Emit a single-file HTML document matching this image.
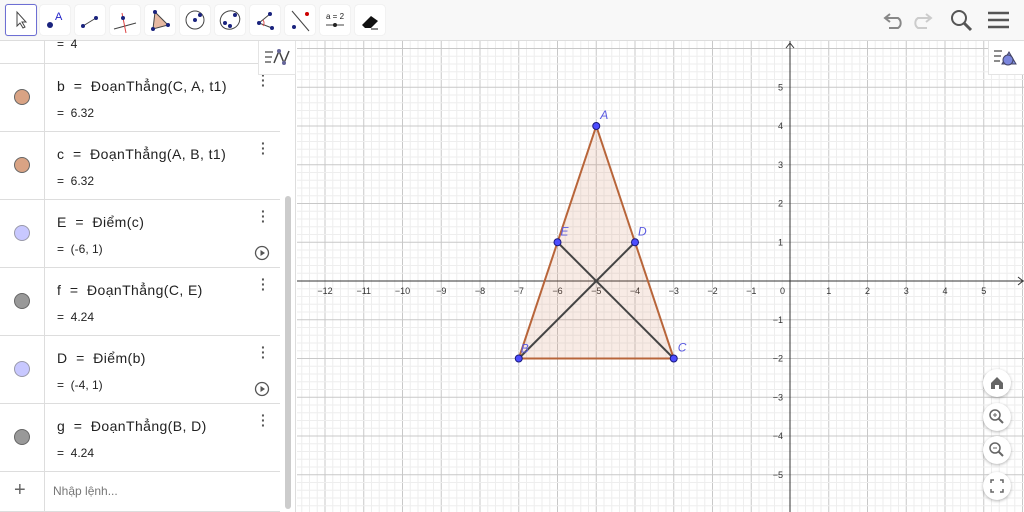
<!DOCTYPE html>
<html><head><meta charset="utf-8"><style>
body{margin:0;width:1024px;height:512px;overflow:hidden;background:#fff;font-family:"Liberation Sans",sans-serif;position:relative}
#tb{position:absolute;left:0;top:0;width:1024px;height:40px;background:#f8f8f8;border-bottom:1px solid #ddd}
.tool{position:absolute;top:5px;width:30px;height:30px;background:#fff;border-radius:3px;box-shadow:0 0 1px #ccc}
#ap{position:absolute;left:0;top:41px;width:295px;height:471px;background:#fff;border-right:1px solid #ddd}
.row{position:absolute;left:0;width:280px;height:68px;border-bottom:1px solid #ddd}
.row .c{position:absolute;left:14px;top:26px;width:14px;height:14px;border-radius:50%;border:1px solid #666}
.row .n{position:absolute;left:57px;top:15px;font-size:14px;letter-spacing:0.4px;color:#222}
.row .v{position:absolute;left:57px;top:43px;font-size:12px;color:#222}
.row .dots{position:absolute;left:261px;top:10px;font-size:14px;color:#555;line-height:5px;font-weight:bold}
.rb{position:absolute;left:983px;width:28px;height:28px;border-radius:50%;background:#fff;box-shadow:0 1px 3px rgba(0,0,0,.3)}
</style></head><body>
<svg id="g" width="1024" height="512" style="position:absolute;left:0;top:0"></svg>
<div id="tb">
<div class="tool" style="left:5px;border:1.5px solid #6d6fd4;top:4px"><svg width="30" height="30"><path d="M11 7 L11 21 L14 18 L17 23 L19 22 L16 17 L20 17 Z" fill="#fff" stroke="#444"/></svg></div>
<div class="tool" style="left:40px"><svg width="30" height="30"><circle cx="10" cy="20" r="3" fill="#1a237e"/><text x="15" y="15" font-size="11" fill="#2323c8">A</text></svg></div>
<div class="tool" style="left:75px"><svg width="30" height="30"><line x1="8" y1="21" x2="21" y2="13" stroke="#444"/><circle cx="8" cy="21" r="2" fill="#1a237e"/><circle cx="21" cy="13" r="2" fill="#1a237e"/></svg></div>
<div class="tool" style="left:110px"><svg width="30" height="30"><line x1="4" y1="24" x2="26" y2="18" stroke="#444"/><line x1="12" y1="8" x2="16" y2="28" stroke="#d44"/><circle cx="13" cy="13" r="2" fill="#1a237e"/></svg></div>
<div class="tool" style="left:145px"><svg width="30" height="30"><path d="M10 7 L23 20 L8 24Z" fill="#e7b9a2" stroke="#444"/><circle cx="10" cy="7" r="2" fill="#1a237e"/><circle cx="23" cy="20" r="2" fill="#1a237e"/><circle cx="8" cy="24" r="2" fill="#1a237e"/></svg></div>
<div class="tool" style="left:180px"><svg width="30" height="30"><circle cx="15" cy="15" r="9" fill="none" stroke="#444"/><circle cx="15" cy="15" r="2" fill="#1a237e"/><circle cx="20" cy="10" r="2" fill="#1a237e"/></svg></div>
<div class="tool" style="left:215px"><svg width="30" height="30"><ellipse cx="15" cy="15" rx="10" ry="9" fill="none" stroke="#444" transform="rotate(-30 15 15)"/><circle cx="10" cy="18" r="2" fill="#1a237e"/><circle cx="15" cy="21" r="2" fill="#1a237e"/><circle cx="20" cy="10" r="2" fill="#1a237e"/></svg></div>
<div class="tool" style="left:250px"><svg width="30" height="30"><path d="M20 9 L9 18 L22 23" fill="none" stroke="#444"/><path d="M13 15 A5 5 0 0 1 13 21" fill="none" stroke="#d44"/><circle cx="20" cy="9" r="2" fill="#1a237e"/><circle cx="9" cy="18" r="2" fill="#1a237e"/><circle cx="22" cy="23" r="2" fill="#1a237e"/></svg></div>
<div class="tool" style="left:285px"><svg width="30" height="30"><line x1="7" y1="6" x2="24" y2="26" stroke="#444"/><circle cx="22" cy="9" r="2" fill="#c00"/><circle cx="9" cy="22" r="2" fill="#1a237e"/></svg></div>
<div class="tool" style="left:320px"><svg width="30" height="30"><text x="6" y="14" font-size="8" fill="#222">a = 2</text><line x1="6" y1="20" x2="24" y2="20" stroke="#444"/><circle cx="15" cy="20" r="2" fill="#222"/></svg></div>
<div class="tool" style="left:355px"><svg width="30" height="30"><path d="M7 20 L16 11 L23 16 L16 23 L10 23 Z" fill="#111"/><line x1="16" y1="24" x2="23" y2="24" stroke="#111"/></svg></div>
<svg style="position:absolute;left:880px;top:6px" width="140" height="28">
<path d="M10 8 L5 12 L10 16 M5 12 H18 A6 6 0 0 1 18 22 H9" fill="none" stroke="#888" stroke-width="2"/>
<path d="M46 8 L51 12 L46 16 M51 12 H38 A6 6 0 0 0 38 22 H47" fill="none" stroke="#ccc" stroke-width="2"/>
<circle cx="79" cy="12" r="7" fill="none" stroke="#555" stroke-width="2"/><line x1="84" y1="17" x2="91" y2="24" stroke="#555" stroke-width="3"/>
<path d="M108 7 H129 M108 14 H129 M108 21 H129" stroke="#555" stroke-width="2.5"/>
</svg>
</div>
<div id="ap">
<div class="row" style="top:-46px"><div class="v" style="top:42px">=&nbsp; 4</div></div>
<div class="row" style="top:22px"><div class="c" style="background:#d9a384"></div><div class="n">b &nbsp;= &nbsp;ĐoạnThẳng(C, A, t1)</div><div class="v">=&nbsp; 6.32</div><div class="dots">·<br>·<br>·</div></div>
<div class="row" style="top:90px"><div class="c" style="background:#d9a384"></div><div class="n">c &nbsp;= &nbsp;ĐoạnThẳng(A, B, t1)</div><div class="v">=&nbsp; 6.32</div><div class="dots">·<br>·<br>·</div></div>
<div class="row" style="top:158px"><div class="c" style="background:#c8c8ff;border-color:#99a"></div><div class="n">E &nbsp;= &nbsp;Điểm(c)</div><div class="v">=&nbsp; (-6, 1)</div><div class="dots">·<br>·<br>·</div><svg style="position:absolute;left:254px;top:46px" width="16" height="16"><circle cx="8" cy="8" r="6.5" fill="none" stroke="#555" stroke-width="1.3"/><path d="M6.5 5 L11 8 L6.5 11Z" fill="#555"/></svg></div>
<div class="row" style="top:226px"><div class="c" style="background:#999"></div><div class="n">f &nbsp;= &nbsp;ĐoạnThẳng(C, E)</div><div class="v">=&nbsp; 4.24</div><div class="dots">·<br>·<br>·</div></div>
<div class="row" style="top:294px"><div class="c" style="background:#c8c8ff;border-color:#99a"></div><div class="n">D &nbsp;= &nbsp;Điểm(b)</div><div class="v">=&nbsp; (-4, 1)</div><div class="dots">·<br>·<br>·</div><svg style="position:absolute;left:254px;top:46px" width="16" height="16"><circle cx="8" cy="8" r="6.5" fill="none" stroke="#555" stroke-width="1.3"/><path d="M6.5 5 L11 8 L6.5 11Z" fill="#555"/></svg></div>
<div class="row" style="top:362px"><div class="c" style="background:#999"></div><div class="n">g &nbsp;= &nbsp;ĐoạnThẳng(B, D)</div><div class="v">=&nbsp; 4.24</div><div class="dots">·<br>·<br>·</div></div>
<div class="row" style="top:430px;height:40px"><div style="position:absolute;left:14px;top:8px;font-size:20px;color:#666">+</div><div style="position:absolute;left:53px;top:13px;font-size:12px;color:#777">Nhập lệnh...</div></div>
<div style="position:absolute;left:44px;top:0;width:1px;height:471px;background:#ddd"></div>
<div style="position:absolute;left:285px;top:155px;width:6px;height:313px;background:#ccc;border-radius:3px"></div>
<div style="position:absolute;left:258px;top:0;width:36px;height:33px;background:#fff;border:1px solid #e4e4e4;border-top:none"><svg width="36" height="33"><path d="M6 11 H14 M6 16 H13 M6 21 H12" stroke="#666" stroke-width="1.5"/><path d="M15 22 L20 10 L25 22 L30 10" fill="none" stroke="#444" stroke-width="1.5"/><circle cx="20" cy="10" r="2" fill="#669"/><circle cx="25" cy="22" r="2" fill="#669"/></svg></div>
</div>
<div style="position:absolute;left:988px;top:41px;width:36px;height:33px;background:#fff;border-left:1px solid #e4e4e4;border-bottom:1px solid #e4e4e4"><svg width="36" height="33"><path d="M5 10 H13 M5 15 H12 M5 20 H11" stroke="#666" stroke-width="1.5"/><path d="M20 11 L27 23 H13Z" fill="#8090e0" stroke="#446"/><circle cx="19" cy="19" r="5" fill="#7b86dd" stroke="#446"/></svg></div>
<div class="rb" style="top:369px"><svg width="28" height="28"><path d="M8 14 L14 8 L20 14 V20 H16 V16 H12 V20 H8Z" fill="#666"/></svg></div>
<div class="rb" style="top:403px"><svg width="28" height="28"><circle cx="12" cy="12" r="5" fill="none" stroke="#666" stroke-width="1.5"/><line x1="15.5" y1="15.5" x2="20" y2="20" stroke="#666" stroke-width="2"/><path d="M10 12H14M12 10V14" stroke="#666"/></svg></div>
<div class="rb" style="top:436px"><svg width="28" height="28"><circle cx="12" cy="12" r="5" fill="none" stroke="#666" stroke-width="1.5"/><line x1="15.5" y1="15.5" x2="20" y2="20" stroke="#666" stroke-width="2"/><path d="M10 12H14" stroke="#666"/></svg></div>
<div class="rb" style="top:472px"><svg width="28" height="28"><path d="M8 11V8H11 M17 8H20V11 M20 17V20H17 M11 20H8V17" fill="none" stroke="#666" stroke-width="1.5"/></svg></div>
<script>
var s='',ox=790,oy=281,u=38.75,L=297,T=41;
for(var i=-80;i<=40;i++){var x=ox+i*u/5;if(x<L||x>1024)continue;s+='<line x1="'+x+'" y1="'+T+'" x2="'+x+'" y2="512" stroke="'+(i%5?'#eeeeee':'#c8c8c8')+'" stroke-width="1"/>';}
for(var j=-40;j<=40;j++){var y=oy+j*u/5;if(y<T||y>512)continue;s+='<line x1="'+L+'" y1="'+y+'" x2="1024" y2="'+y+'" stroke="'+(j%5?'#eeeeee':'#c8c8c8')+'" stroke-width="1"/>';}
s+='<line x1="'+L+'" y1="'+oy+'" x2="1024" y2="'+oy+'" stroke="#333"/><line x1="'+ox+'" y1="'+T+'" x2="'+ox+'" y2="512" stroke="#333"/>';
s+='<path d="M786 48 L790 43 L794 48" fill="none" stroke="#333"/><path d="M1018 277 L1023 281 L1018 285" fill="none" stroke="#333"/>';
for(var k=-12;k<=5;k++){if(!k)continue;var x=ox+k*u;s+='<text x="'+x+'" y="294" font-size="9" fill="#333" text-anchor="middle">'+(k<0?'\u2212'+(-k):k)+'</text>';}
for(var k=-5;k<=5;k++){if(!k)continue;var y=oy-k*u;s+='<text x="783" y="'+(y+3)+'" font-size="9" fill="#333" text-anchor="end">'+(k<0?'\u2212'+(-k):k)+'</text>';}
s+='<text x="780" y="294" font-size="9" fill="#333">0</text>';
function P(a,b){return [ox+a*u,oy-b*u];}
var A=P(-5,4),B=P(-7,-2),C=P(-3,-2),E=P(-6,1),D=P(-4,1);
s+='<polygon points="'+A+' '+B+' '+C+'" fill="rgba(204,102,51,0.13)" stroke="#b8653a" stroke-width="2"/>';
s+='<line x1="'+C[0]+'" y1="'+C[1]+'" x2="'+E[0]+'" y2="'+E[1]+'" stroke="#444" stroke-width="2"/>';
s+='<line x1="'+B[0]+'" y1="'+B[1]+'" x2="'+D[0]+'" y2="'+D[1]+'" stroke="#444" stroke-width="2"/>';
[[A,'A',4,-7],[B,'B',2,-6],[C,'C',4,-7],[E,'E',3,-7],[D,'D',3,-7]].forEach(function(p){s+='<circle cx="'+p[0][0]+'" cy="'+p[0][1]+'" r="3.5" fill="#4d4dff" stroke="#1a1a80"/><text x="'+(p[0][0]+p[2])+'" y="'+(p[0][1]+p[3])+'" font-size="12" font-style="italic" fill="#5a5ae0">'+p[1]+'</text>';});
document.getElementById('g').innerHTML=s;
</script>
</body></html>
